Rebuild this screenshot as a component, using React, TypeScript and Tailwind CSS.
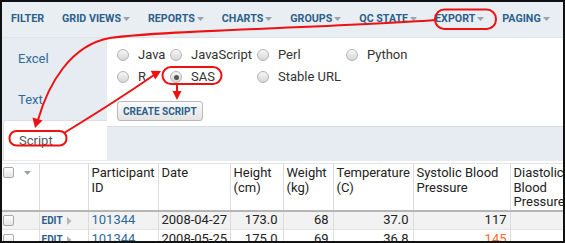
import React from 'react';

const menu = [
  { label: 'FILTER', caret: false },
  { label: 'GRID VIEWS', caret: true },
  { label: 'REPORTS', caret: true },
  { label: 'CHARTS', caret: true },
  { label: 'GROUPS', caret: true },
  { label: 'QC STATE', caret: true },
  { label: 'EXPORT', caret: true },
  { label: 'PAGING', caret: true },
];

function Caret() {
  return (
    <svg width="7" height="4" viewBox="0 0 7 4" className="ml-[2px] shrink-0">
      <path d="M0 0 L7 0 L3.5 4 Z" fill="#9aa3ab" />
    </svg>
  );
}

function Radio({ checked }: { checked?: boolean }) {
  return (
    <span className="w-[12px] h-[12px] rounded-full border border-[#b3b3b3] bg-gradient-to-b from-[#f7f7f7] to-[#d6d6d6] flex items-center justify-center shrink-0">
      {checked && <span className="w-[5px] h-[5px] rounded-full bg-[#555]" />}
    </span>
  );
}

function Check() {
  return <span className="block w-[11px] h-[11px] rounded-[2px] border border-[#a9a9a9] bg-gradient-to-b from-white to-[#e4e4e4]" />;
}

const radios: { label: string; checked?: boolean }[][] = [
  [{ label: 'Java' }, { label: 'JavaScript' }, { label: 'Perl' }, { label: 'Python' }],
  [{ label: 'R' }, { label: 'SAS', checked: true }, { label: 'Stable URL' }],
];

const cols = [37, 49, 70, 72, 53, 50, 80, 97, 80];

const headers: string[][] = [
  ['Participant', 'ID'],
  ['Date'],
  ['Height', '(cm)'],
  ['Weight', '(kg)'],
  ['Temperature', '(C)'],
  ['Systolic Blood', 'Pressure'],
  ['Diastolic', 'Blood', 'Pressure'],
];

const rows = [
  { id: '101344', date: '2008-04-27', h: '173.0', w: '68', t: '37.0', s: '117', sHi: false, d: '80' },
  { id: '101344', date: '2008-05-25', h: '175.0', w: '69', t: '36.8', s: '145', sHi: true, d: '102' },
];

export default function App() {
  return (
    <div className="relative w-[565px] h-[243px] border-2 border-[#111] overflow-hidden bg-white font-['Roboto',sans-serif] text-[#222]">
      {/* menu bar */}
      <div className="h-[35px] bg-[#e9eef3] flex items-center pl-[9px] gap-[18px] text-[10.7px] font-bold text-[#2d5f8b] whitespace-nowrap">
        {menu.map((m) => (
          <div key={m.label} className="flex items-center shrink-0">
            <span>{m.label}</span>
            {m.caret && <Caret />}
          </div>
        ))}
      </div>

      {/* export panel */}
      <div className="flex h-[124px] border-t border-[#dde3e9]">
        <div className="w-[105px] bg-[#e6ecf2] text-[13px]">
          <div className="h-[41px] flex items-center pl-[16px] text-[#2f6a9a]">Excel</div>
          <div className="h-[41px] flex items-center pl-[16px] text-[#2f6a9a]">Text</div>
          <div className="h-[40px] ml-[1px] flex items-center pl-[15px] bg-white rounded-tl-[3px] border-l border-t border-[#e0e0e0] text-[#555]">
            Script
          </div>
        </div>
        <div className="flex-1 flex flex-col">
          <div className="h-[89px] bg-white border-b border-[#d8dde2] pl-[10px] pt-[6px]">
            <div className="grid grid-cols-[53px_87px_89px_auto] text-[13px] text-[#333]">
              {radios.map((row, ri) =>
                row.map((r) => (
                  <div key={ri + r.label} className="h-[22px] flex items-center whitespace-nowrap">
                    <Radio checked={r.checked} />
                    <span className="ml-[9px]">{r.label}</span>
                  </div>
                ))
              )}
            </div>
            <button className="mt-[13px] h-[20px] px-[5px] rounded-[3px] border border-[#b9b9b9] bg-gradient-to-b from-[#fbfbfb] to-[#e3e3e3] text-[10px] font-bold text-[#2d5f8b] flex items-center">
              CREATE SCRIPT
            </button>
          </div>
          <div className="flex-1 bg-[#e6ecf2]" />
        </div>
      </div>

      {/* grid */}
      <table className="table-fixed border-collapse text-[13px] leading-[14.5px] mt-[2px] whitespace-nowrap" style={{ width: cols.reduce((a, b) => a + b, 0), minWidth: cols.reduce((a, b) => a + b, 0) }}>
        <colgroup>
          {cols.map((w, i) => (
            <col key={i} style={{ width: w }} />
          ))}
        </colgroup>
        <thead>
          <tr className="h-[47px] border-t border-[#e3e3e3] border-b-2 border-b-[#b5b5b5] align-top">
            <th className="border-r border-[#dcdcdc] font-normal text-left pl-[1px] pt-[3px]">
              <div className="flex items-center gap-[10px]">
                <Check />
                <svg width="7" height="4" viewBox="0 0 7 4"><path d="M0 0 L7 0 L3.5 4 Z" fill="#9aa3ab" /></svg>
              </div>
            </th>
            <th className="border-r border-[#dcdcdc]" />
            {headers.map((h, i) => (
              <th key={i} className="border-r border-[#dcdcdc] font-normal text-left px-[3px] pt-[2px] text-[#222] overflow-hidden">
                {h.map((line, j) => (
                  <div key={j}>{line}</div>
                ))}
              </th>
            ))}
          </tr>
        </thead>
        <tbody>
          {rows.map((r, i) => (
            <tr key={i} className={`h-[19px] border-b border-[#e3e3e3] ${i === 0 ? 'bg-[#f2f2f2]' : 'bg-white'}`}>
              <td className="border-r border-[#dcdcdc] pl-[1px]"><Check /></td>
              <td className="border-r border-[#dcdcdc] pl-[2px]">
                <span className="flex items-center text-[10px] font-bold text-[#2d5f8b] pt-[2px]">
                  EDIT
                  <svg width="5" height="8" viewBox="0 0 5 8" className="ml-[4px]"><path d="M0 0 L4.5 4 L0 8 Z" fill="#b5b5b5" /></svg>
                </span>
              </td>
              <td className="border-r border-[#dcdcdc] px-[3px] text-[#2f6a9a]">{r.id}</td>
              <td className="border-r border-[#dcdcdc] px-[3px]">{r.date}</td>
              <td className="border-r border-[#dcdcdc] pr-[5px] text-right">{r.h}</td>
              <td className="border-r border-[#dcdcdc] pr-[4px] text-right">{r.w}</td>
              <td className="border-r border-[#dcdcdc] pr-[4px] text-right">{r.t}</td>
              <td className={`border-r border-[#dcdcdc] pr-[3px] text-right ${r.sHi ? 'text-[#ff6a1a]' : ''}`}>{r.s}</td>
              <td className="border-r border-[#dcdcdc] pr-[3px] text-right">{r.d}</td>
            </tr>
          ))}
        </tbody>
      </table>

      {/* red annotations */}
      <svg className="absolute left-[-2px] top-[-2px] pointer-events-none" width="565" height="243" viewBox="0 0 565 243" fill="none">
        <g stroke="#ee1111" strokeWidth="2" fill="none">
          <rect x="435" y="9.5" width="61" height="19.5" rx="9.5" />
          <rect x="162.5" y="67" width="59" height="17" rx="8.5" />
          <rect x="9.5" y="131" width="57" height="14.5" rx="7" />
          <path d="M436 20 C330 28 160 30 110 38 C70 45 48 85 38 120" />
          <path d="M64 133 Q118 100 154 75" />
          <path d="M177 84 L177 92" />
        </g>
        <g fill="#ee1111">
          <polygon points="35,128 42.5,120.5 32.5,117.5" />
          <polygon points="161,71 155.3,79.5 150.7,70.7" />
          <polygon points="177,100 172.5,91 181.5,91" />
        </g>
      </svg>
    </div>
  );
}
